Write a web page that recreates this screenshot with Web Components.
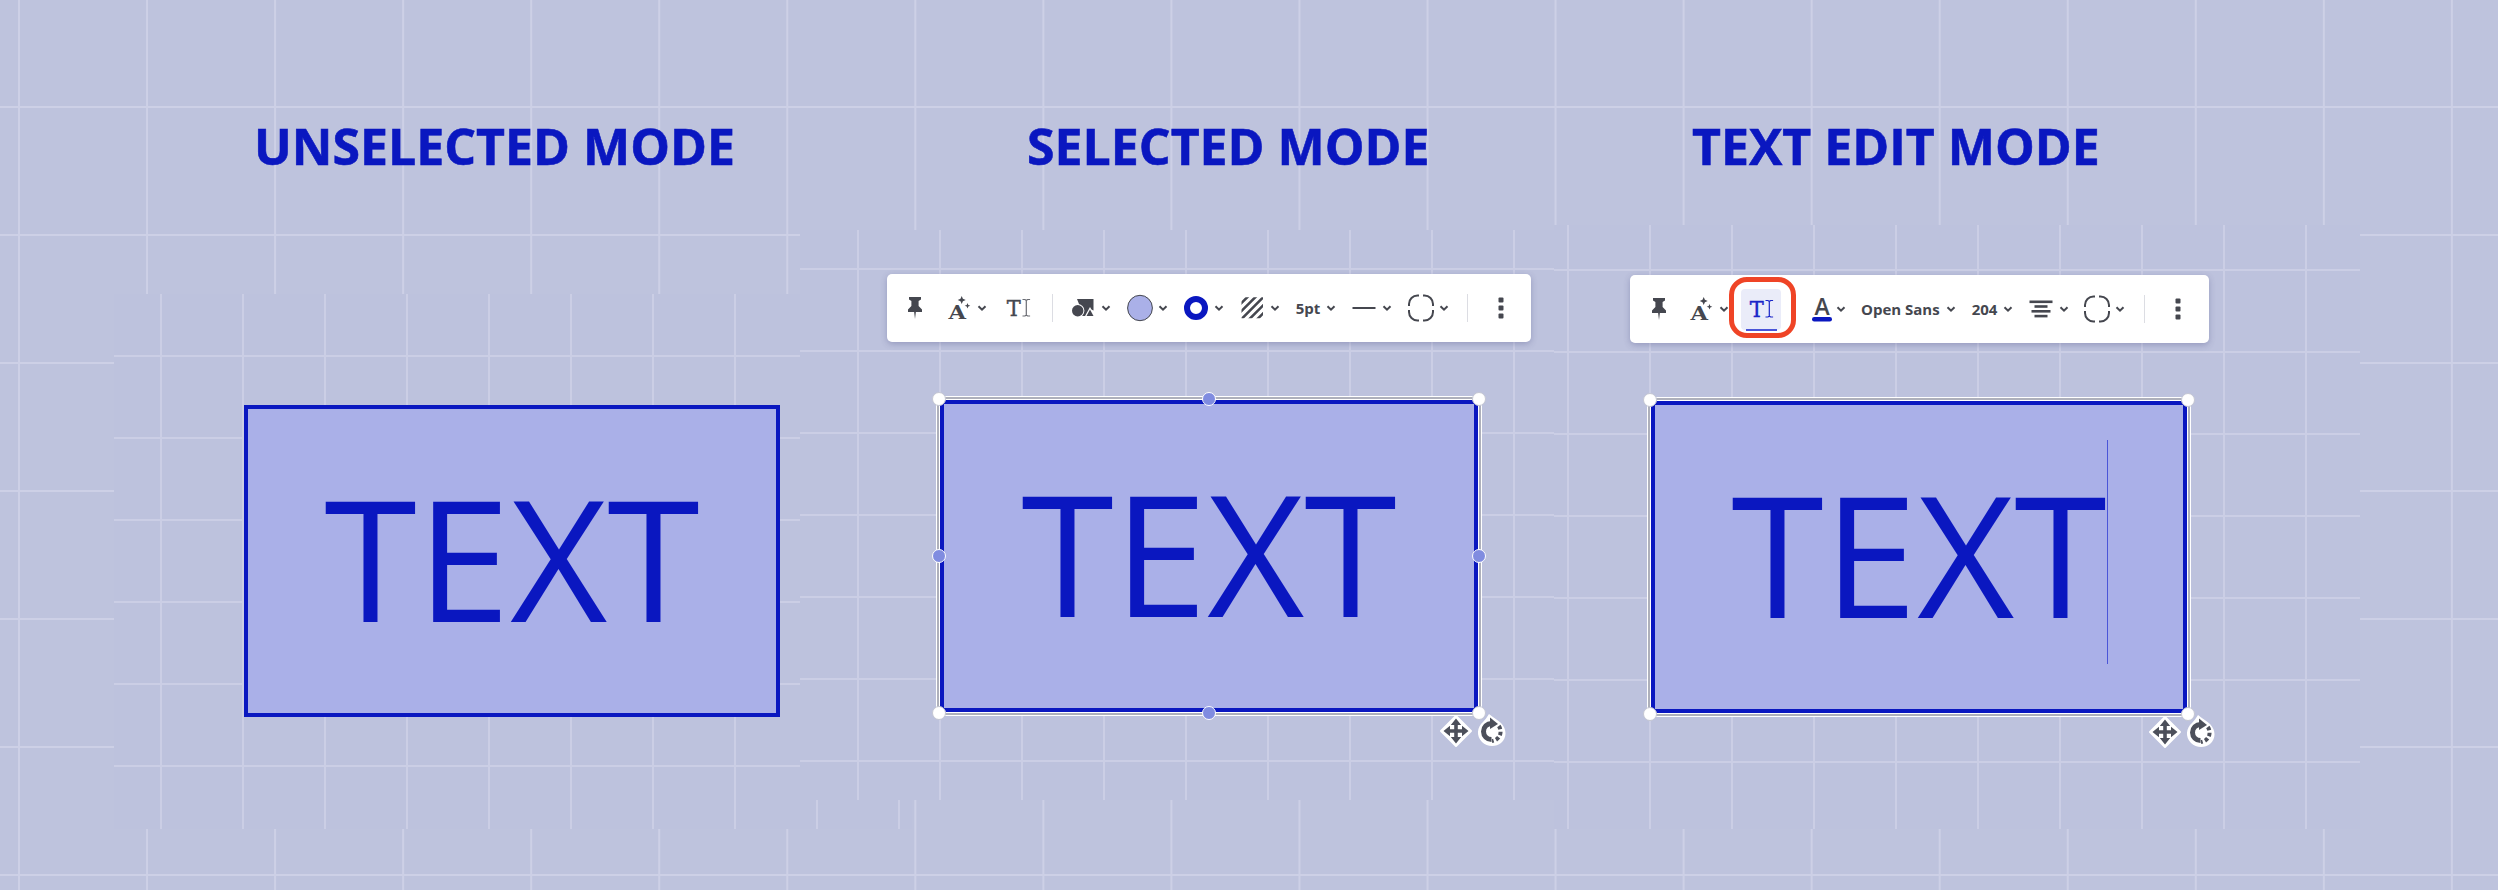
<!DOCTYPE html>
<html>
<head>
<meta charset="utf-8">
<title>Text modes</title>
<style>
  html, body { margin: 0; padding: 0; background: #bec3dd; overflow: hidden; }
</style>
</head>
<body>
<sk-canvas>
  <sk-grid x="114" y="294" w="798" h="535" ox="46" oy="61"></sk-grid>
  <sk-grid x="1554" y="225" w="806" h="604" ox="13" oy="44"></sk-grid>
  <sk-grid x="800" y="230" w="754" h="570" ox="57" oy="38"></sk-grid>

  <sk-heading x="254">UNSELECTED MODE</sk-heading>
  <sk-heading x="1027">SELECTED MODE</sk-heading>
  <sk-heading x="1692">TEXT EDIT MODE</sk-heading>

  <sk-shape x="244" y="405" h="312" w="536">TEXT</sk-shape>
  <sk-shape x="940" y="400" h="312" w="538" mode="selected">TEXT</sk-shape>
  <sk-shape x="1651" y="401" h="312" w="536" mode="edit">TEXT</sk-shape>

  <sk-toolbar x="887" y="274" w="644">
    <sk-tool plain><sk-icon name="pin"></sk-icon></sk-tool>
    <sk-tool style="margin-left:16px"><sk-icon name="sparkle"></sk-icon></sk-tool>
    <sk-tool plain style="margin-left:17px"><sk-icon name="textbox"></sk-icon></sk-tool>
    <sk-sep style="margin-left:20px"></sk-sep>
    <sk-tool style="margin-left:16px"><sk-icon name="shapes"></sk-icon></sk-tool>
    <sk-tool style="margin-left:15px"><sk-icon name="fill"></sk-icon></sk-tool>
    <sk-tool style="margin-left:14px"><sk-icon name="ring"></sk-icon></sk-tool>
    <sk-tool style="margin-left:14px"><sk-icon name="hatch"></sk-icon></sk-tool>
    <sk-tool style="margin-left:14px"><sk-label w="28">5pt</sk-label></sk-tool>
    <sk-tool style="margin-left:14px"><sk-icon name="line"></sk-icon></sk-tool>
    <sk-tool style="margin-left:15px"><sk-icon name="corners"></sk-icon></sk-tool>
    <sk-sep style="margin-left:18px"></sk-sep>
    <sk-tool plain style="margin-left:19px"><sk-icon name="dots"></sk-icon></sk-tool>
  </sk-toolbar>

  <sk-toolbar x="1630" y="275" w="579">
    <sk-tool plain style="margin-left:1px"><sk-icon name="pin"></sk-icon></sk-tool>
    <sk-tool style="margin-left:14px"><sk-icon name="sparkle"></sk-icon></sk-tool>
    <sk-tool plain active style="margin-left:12px"><sk-icon name="textbox" color="#1a26c8"></sk-icon></sk-tool>
    <sk-tool style="margin-left:29px;--chev-gap:2px"><sk-icon name="textcolor" size="24"></sk-icon></sk-tool>
    <sk-tool style="margin-left:15px;--chev-gap:6px"><sk-label>Open Sans</sk-label></sk-tool>
    <sk-tool style="margin-left:16px;--chev-gap:6px"><sk-label>204</sk-label></sk-tool>
    <sk-tool style="margin-left:14px"><sk-icon name="align"></sk-icon></sk-tool>
    <sk-tool style="margin-left:14px"><sk-icon name="corners"></sk-icon></sk-tool>
    <sk-sep style="margin-left:19px"></sk-sep>
    <sk-tool plain style="margin-left:19px"><sk-icon name="dots"></sk-icon></sk-tool>
  </sk-toolbar>
</sk-canvas>

<script>
class SkCanvas extends HTMLElement {
  constructor() {
    super();
    this.attachShadow({ mode: 'open' });
    this.shadowRoot.innerHTML = `
      <style>
        :host {
          display: block;
          position: relative;
          width: 2498px;
          height: 890px;
          overflow: hidden;
          font-family: "Open Sans", sans-serif;
          background-color: #bec3dd;
          background-image:
            linear-gradient(to right, #cdd0e6 2px, transparent 2px),
            linear-gradient(to bottom, #cdd0e6 2px, transparent 2px);
          background-size: 128.05px 128px;
          background-position: 18px 106px;
        }
      </style>
      <slot></slot>
    `;
  }
}

class SkGrid extends HTMLElement {
  constructor() {
    super();
    const a = (n) => this.getAttribute(n);
    this.attachShadow({ mode: 'open' });
    this.shadowRoot.innerHTML = `
      <style>
        :host {
          display: block;
          position: absolute;
          left: ${a('x')}px;
          top: ${a('y')}px;
          width: ${a('w')}px;
          height: ${a('h')}px;
          background-color: #bdc2dd;
          background-image:
            linear-gradient(to right, #cbcee5 1.5px, transparent 1.5px),
            linear-gradient(to bottom, #cbcee5 2px, transparent 2px);
          background-size: 82px 82px;
          background-position: ${a('ox')}px ${a('oy')}px;
        }
      </style>
    `;
  }
}

class SkHeading extends HTMLElement {
  constructor() {
    super();
    const a = (n) => this.getAttribute(n);
    this.attachShadow({ mode: 'open' });
    this.shadowRoot.innerHTML = `
      <style>
        :host {
          display: block;
          position: absolute;
          left: ${a('x')}px;
          top: 112px;
          font-size: 50px;
          line-height: 68px;
          font-weight: 700;
          -webkit-text-stroke: 0.6px #0a17c0;
          white-space: nowrap;
          color: #0a17c0;
        }
      </style>
      <slot></slot>
    `;
  }
}

class SkShape extends HTMLElement {
  constructor() {
    super();
    const a = (n) => this.getAttribute(n);
    const mode = a('mode') || 'unselected';
    const selection = mode === 'unselected' ? '' : `
      <div class="selection">
        <i class="h c" style="left:0;top:0"></i>
        <i class="h c" style="left:100%;top:0"></i>
        <i class="h c" style="left:0;top:100%"></i>
        <i class="h c" style="left:100%;top:100%"></i>
        ${mode === 'selected' ? `
        <i class="h" style="left:50%;top:0"></i>
        <i class="h" style="left:50%;top:100%"></i>
        <i class="h" style="left:0;top:50%"></i>
        <i class="h" style="left:100%;top:50%"></i>` : ''}
        <sk-icon class="move" name="move" size="32"></sk-icon>
        <sk-icon class="rotate" name="rotate" size="32"></sk-icon>
      </div>`;
    this.attachShadow({ mode: 'open' });
    this.shadowRoot.innerHTML = `
      <style>
        :host {
          display: flex;
          align-items: center;
          justify-content: center;
          box-sizing: border-box;
          position: absolute;
          left: ${a('x')}px;
          top: ${a('y')}px;
          width: ${a('w')}px;
          height: ${a('h')}px;
          border: 4px solid #0a17c0;
          background: #aab0e8;
          color: #0a17c0;
          font-size: 168px;
          padding-bottom: 10px;
        }
        .text { position: relative; }
        .caret {
          position: absolute;
          left: 100%;
          top: 2px;
          width: 1.5px;
          height: 224px;
          background: #4a55d8;
        }
        .selection {
          position: absolute;
          inset: -7px;
          box-sizing: border-box;
          border: 2px solid #aeb0bb;
          box-shadow: 0 0 0 1px #fff, inset 0 0 0 1px #fff;
        }
        .h {
          position: absolute;
          width: 12px;
          height: 12px;
          margin: -7.500px 0 0 -7.500px;
          border-radius: 50%;
          border: 1.500px solid #fff;
          background: #808ce0;
        }
        .h.c {
          background: #fff;
          border-color: #c4c6d2;
        }
        .move { position: absolute; right: 7px; bottom: -34px; }
        .rotate { position: absolute; right: -30px; bottom: -33px; }
      </style>
      <span class="text"><slot></slot>${mode === 'edit' ? '<span class="caret"></span>' : ''}</span>
      ${selection}
    `;
  }
}

class SkToolbar extends HTMLElement {
  constructor() {
    super();
    const a = (n) => this.getAttribute(n);
    this.attachShadow({ mode: 'open' });
    this.shadowRoot.innerHTML = `
      <style>
        :host {
          display: flex;
          align-items: center;
          box-sizing: border-box;
          position: absolute;
          left: ${a('x')}px;
          top: ${a('y')}px;
          width: ${a('w')}px;
          height: 68px;
          padding-left: 14px;
          background: #fff;
          border-radius: 5px;
          box-shadow: 0 2px 6px rgba(60, 64, 120, .3);
          color: #45474f;
        }
      </style>
      <slot></slot>
    `;
  }
}

class SkTool extends HTMLElement {
  constructor() {
    super();
    const plain = this.hasAttribute('plain');
    const active = this.hasAttribute('active');
    this.attachShadow({ mode: 'open' });
    this.shadowRoot.innerHTML = `
      <style>
        :host {
          display: flex;
          align-items: center;
          position: relative;
        }
        :host([active]) {
          justify-content: center;
          box-sizing: border-box;
          width: 40px;
          height: 41px;
          border-radius: 4px;
          background: #eaecf9;
        }
        .chev { margin-left: var(--chev-gap, 4px); display: block; }
        .bar {
          position: absolute;
          left: 5px;
          right: 4px;
          bottom: -1px;
          height: 2px;
          background: #4a55d8;
        }
        .ring {
          position: absolute;
          left: -12px;
          right: -15px;
          top: -12px;
          bottom: -8px;
          box-sizing: border-box;
          border: 5px solid #ef4426;
          border-radius: 18px;
        }
      </style>
      <slot></slot>
      ${plain ? '' : '<svg class="chev" width="10" height="7" viewBox="0 0 10 7"><path d="M1.500 1.200l3.500 3.500 3.500-3.500" fill="none" stroke="#45474f" stroke-width="2"/></svg>'}
      ${active ? '<div class="bar"></div><div class="ring"></div>' : ''}
    `;
  }
}

class SkSep extends HTMLElement {
  constructor() {
    super();
    this.attachShadow({ mode: 'open' });
    this.shadowRoot.innerHTML = `
      <style>
        :host { display: block; width: 1px; height: 28px; background: #dcdde3; }
      </style>
    `;
  }
}

class SkLabel extends HTMLElement {
  constructor() {
    super();
    const w = this.getAttribute('w');
    this.attachShadow({ mode: 'open' });
    this.shadowRoot.innerHTML = `
      <style>
        :host {
          display: block;
          ${w ? `width:${w}px;` : ''}
          text-align: center;
          font-size: 15px;
          font-weight: 700;
          white-space: nowrap;
          color: #45474f;
        }
      </style>
      <slot></slot>
    `;
  }
}

// icons are all drawn on a 28 unit box unless size says otherwise
const ICONS = {
  pin: (c) => `<path fill="${c}" d="M8 3h12v2.400l-2.400 1.600v5l3.400 3.600V18H7v-2.400l3.400-3.600V7L8 5.400z"/><path fill="${c}" d="M13.100 18h1.800l-.9 7z"/>`,
  sparkle: (c) => `<text x="3.500" y="25" font-family="DejaVu Serif" font-weight="700" font-size="19" textLength="17.500" lengthAdjust="spacingAndGlyphs" fill="${c}">A</text>
    <path fill="${c}" d="M16.700 2l1.200 2.800 2.800 1.200-2.800 1.200-1.200 2.800-1.200-2.800-2.800-1.200 2.800-1.200zM22.500 9l.8 2 2 .8-2 .8-.8 2-.8-2-2-.8 2-.8z"/>`,
  textbox: (c) => `<text x="2.700" y="21.700" font-family="DejaVu Serif" font-size="23" textLength="14" lengthAdjust="spacingAndGlyphs" stroke="${c}" stroke-width=".4" fill="${c}">T</text>
    <path fill="none" stroke="${c === '#45474f' ? '#6a6c73' : c}" stroke-width="1.200" d="M18.500 5.500h2.500l1.300 1 1.300-1h2.500M22.300 6.500v14.500M18.500 22h2.500l1.300-1 1.300 1h2.500"/>`,
  shapes: (c) => `<path fill="${c}" d="M8 5h16.500v11.500l-3.500-1.500-4 7h-5V15z"/>
    <circle cx="8.700" cy="16.700" r="6.700" fill="#fff"/><circle cx="8.700" cy="16.700" r="5.700" fill="${c}"/>
    <path fill="#fff" d="M21 13l5.500 10h-11z"/><path fill="${c}" d="M21 15.500l3.500 6.500h-7z"/>`,
  fill: () => `<ellipse cx="14" cy="14" rx="12.400" ry="12.700" fill="#aab0e8" stroke="#45474f" stroke-width="1"/>`,
  ring: () => `<circle cx="14" cy="14" r="9" fill="none" stroke="#0a17c0" stroke-width="6"/>`,
  hatch: (c) => `<clipPath id="hc"><rect x="3.500" y="3.300" width="21.500" height="21"/></clipPath>
    <path clip-path="url(#hc)" fill="none" stroke="${c}" stroke-width="2.600" d="M2 10.500L10.500 2M2 18.500L18.500 2M2 26.500L26.500 2M8 28.500L28 8.500M16 28.500L28 16.500M24 28.500L28 24.500"/>`,
  line: (c) => `<rect x="2.500" y="13" width="23" height="2" fill="${c}"/>`,
  corners: (c) => `<path fill="none" stroke="${c}" stroke-width="2" d="M2 12v-2a8.500 8.500 0 0 1 8.500-8.500H12M16 1.500h1.500A8.500 8.500 0 0 1 26 10v2M26 16v2a8.500 8.500 0 0 1-8.500 8.500H16M12 26.500h-1.500A8.500 8.500 0 0 1 2 18v-2"/>`,
  dots: (c) => `<rect x="11.500" y="3.500" width="5" height="5" rx="1" fill="${c}"/><rect x="11.500" y="11.500" width="5" height="5" rx="1" fill="${c}"/><rect x="11.500" y="19.500" width="5" height="5" rx="1" fill="${c}"/>`,
  textcolor: (c) => `<text x="12" y="18" text-anchor="middle" font-family="Open Sans" font-weight="600" font-size="23" fill="${c}">A</text><rect x="2" y="20" width="20" height="4.500" rx="2.200" fill="#0a17c0"/>`,
  align: (c) => `<rect x="2.500" y="5.500" width="23" height="2.600" fill="${c}"/><rect x="7.500" y="10.200" width="13" height="2.600" fill="${c}"/><rect x="4.500" y="15" width="19" height="2.600" fill="${c}"/><rect x="7.500" y="19.800" width="13" height="2.600" fill="${c}"/>`,
  move: () => `<path fill="#fff" stroke="#fff" stroke-width="2" stroke-linejoin="round" d="M16 1L31 16 16 31 1 16z"/>
    <path fill="none" stroke="#4c4f5a" stroke-width="3.600" d="M16 9v14M9 16h14"/>
    <path fill="#4c4f5a" d="M16 3.500l5.200 6.500H10.800zM16 28.500l5.200-6.500H10.800zM3.500 16l6.500-5.200v10.400zM28.500 16l-6.500-5.200v10.400z"/>`,
  rotate: () => `<path fill="#fff" d="M12 0c5 4 9 6 12 9 6 6 6 15 0 20-5 4-14 4-19-1-6-6-5-15 1-20 2-2 4-5 6-8z"/>
    <path fill="none" stroke="#4c4f5a" stroke-width="5" d="M14.500 9.500a8 8 0 0 0 0 16"/>
    <path fill="#4c4f5a" d="M13 3.500l8 6.500-8 5z"/>
    <path fill="none" stroke="#4c4f5a" stroke-width="4" stroke-dasharray="3.500 2.500" d="M21.800 12a9.500 9.500 0 0 1-6.800 15"/>`
};

class SkIcon extends HTMLElement {
  constructor() {
    super();
    const name = this.getAttribute('name');
    const size = this.getAttribute('size') || 28;
    const color = this.getAttribute('color') || '#45474f';
    this.attachShadow({ mode: 'open' });
    this.shadowRoot.innerHTML = `
      <style>
        :host { display: block; width: ${size}px; height: ${size}px; }
        svg { display: block; overflow: visible; }
      </style>
      <svg width="${size}" height="${size}" viewBox="0 0 ${size} ${size}">${ICONS[name](color)}</svg>
    `;
  }
}

customElements.define('sk-icon', SkIcon);
customElements.define('sk-label', SkLabel);
customElements.define('sk-sep', SkSep);
customElements.define('sk-tool', SkTool);
customElements.define('sk-toolbar', SkToolbar);
customElements.define('sk-shape', SkShape);
customElements.define('sk-heading', SkHeading);
customElements.define('sk-grid', SkGrid);
customElements.define('sk-canvas', SkCanvas);
</script>
</body>
</html>
